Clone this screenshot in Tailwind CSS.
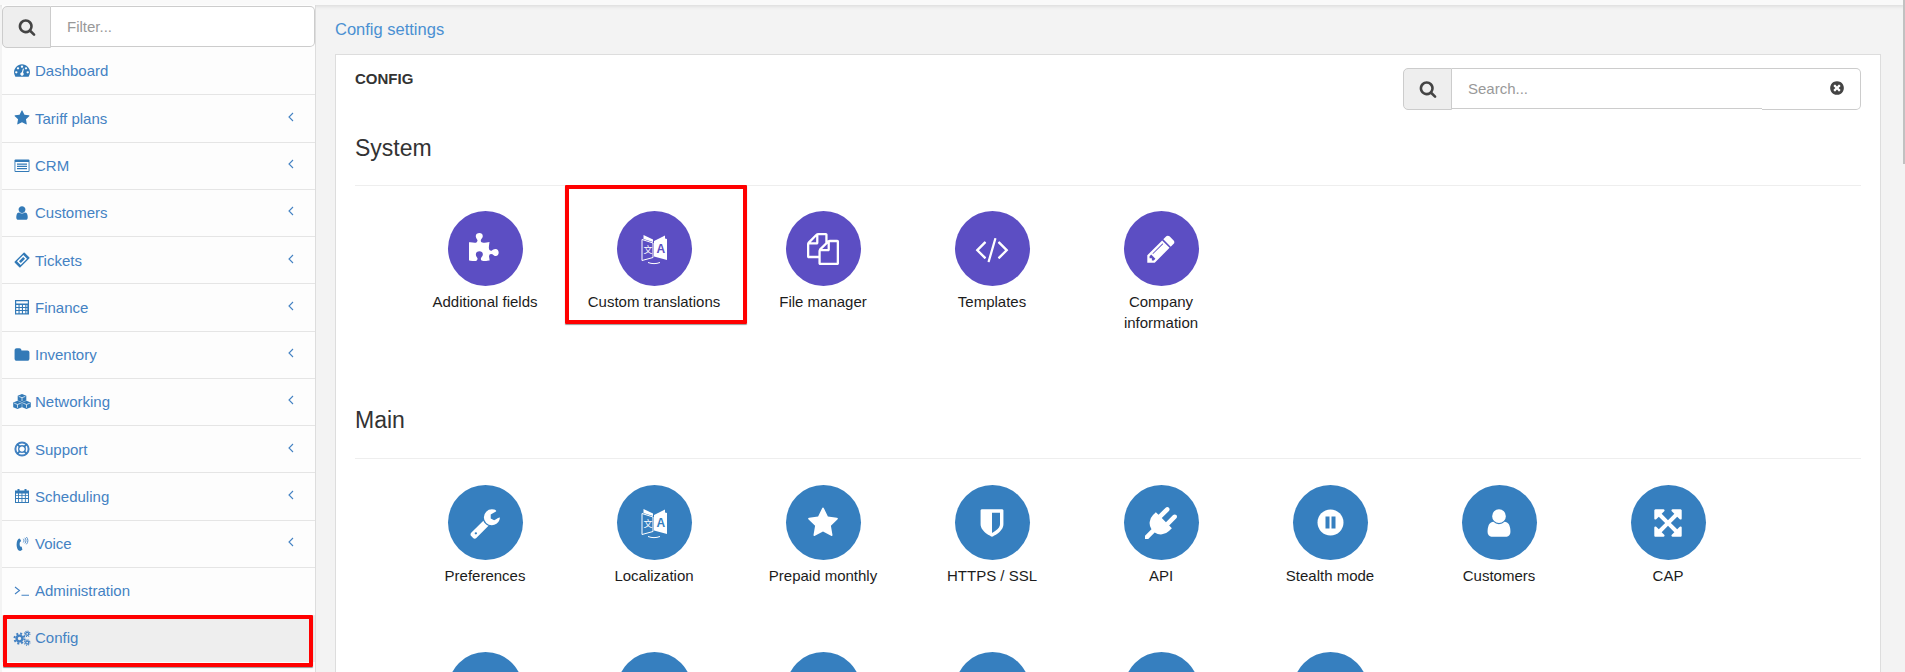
<!DOCTYPE html>
<html lang="en">
<head>
    <meta charset="UTF-8">
    <meta name="viewport" content="width=device-width, initial-scale=1.0">
    <title>Config settings</title>
    <script src="https://cdn.jsdelivr.net/npm/@tailwindcss/browser@4"></script>
</head>
<body class="relative h-[672px] overflow-hidden bg-[#f3f3f3] font-['Liberation_Sans',Arial,sans-serif] text-[15px] leading-[21px]">

    <!-- icon sheet -->
    <svg class="hidden">
        <symbol id="i-search" viewBox="0 0 1792 1792"><path d="M1216 832q0-185-131.5-316.5t-316.5-131.5-316.5 131.5-131.5 316.5 131.5 316.5 316.5 131.5 316.5-131.5 131.5-316.5zm512 832q0 52-38 90t-90 38q-54 0-90-38l-343-342q-179 124-399 124-143 0-273.5-55.5t-225-150-150-225-55.5-273.5 55.5-273.5 150-225 225-150 273.5-55.5 273.5 55.5 225 150 150 225 55.5 273.5q0 220-124 399l343 343q37 37 37 90z"/></symbol>
        <symbol id="i-dash" viewBox="0 0 1792 1792"><path d="M384 1152q0-53-37.5-90.5t-90.5-37.5-90.5 37.5-37.5 90.5 37.5 90.5 90.5 37.5 90.5-37.5 37.5-90.5zm192-448q0-53-37.5-90.5t-90.5-37.5-90.5 37.5-37.5 90.5 37.5 90.5 90.5 37.5 90.5-37.5 37.5-90.5zm428 481l101-382q6-26-7.5-48.5t-38.5-29.5-48 6.5-30 39.5l-101 382q-60 5-107 43.5t-63 98.5q-20 77 20 146t117 89 146-20 89-117q16-60-6-117t-72-91zm660-33q0-53-37.5-90.5t-90.5-37.5-90.5 37.5-37.5 90.5 37.5 90.5 90.5 37.5 90.5-37.5 37.5-90.5zm-640-640q0-53-37.5-90.5t-90.5-37.5-90.5 37.5-37.5 90.5 37.5 90.5 90.5 37.5 90.5-37.5 37.5-90.5zm448 192q0-53-37.5-90.5t-90.5-37.5-90.5 37.5-37.5 90.5 37.5 90.5 90.5 37.5 90.5-37.5 37.5-90.5zm320 448q0 261-141 483-19 29-54 29h-1402q-35 0-54-29-141-221-141-483 0-182 71-348t191-286 286-191 348-71 348 71 286 191 191 286 71 348z"/></symbol>
        <symbol id="i-star" viewBox="0 0 1792 1792"><path d="M1728 647q0 22-26 48l-363 354 86 500q1 7 1 20 0 21-10.5 35.5t-30.5 14.5q-19 0-40-12l-449-236-449 236q-22 12-40 12-21 0-31.5-14.5t-10.5-35.5q0-6 2-20l86-500-364-354q-25-27-25-48 0-37 56-46l502-73 225-455q19-41 49-41t49 41l225 455 502 73q56 9 56 46z"/></symbol>
        <symbol id="i-user" viewBox="0 0 1792 1792"><path d="M1536 1399q0 109-62.5 187t-150.5 78h-854q-88 0-150.5-78t-62.5-187q0-85 8.5-160.5t31.5-152 58.5-131 94-89 134.5-34.5q131 128 313 128t313-128q76 0 134.5 34.5t94 89 58.5 131 31.5 152 8.5 160.5zm-256-887q0 159-112.5 271.5t-271.5 112.5-271.5-112.5-112.5-271.5 112.5-271.5 271.5-112.5 271.5 112.5 112.5 271.5z"/></symbol>
        <symbol id="i-folder" viewBox="0 0 1792 1792"><path d="M1728 608v704q0 92-66 158t-158 66h-1216q-92 0-158-66t-66-158v-960q0-92 66-158t158-66h320q92 0 158 66t66 158v32h672q92 0 158 66t66 158z"/></symbol>
        <symbol id="i-crm" viewBox="0 0 16 16"><rect x="0.5" y="1.5" width="15" height="12.5" rx="1"/><rect x="1.4" y="4" width="13.2" height="9" fill="#fff"/><path d="M3 5.5h10v1.2H3zM3 7.8h10V9H3zM3 10.1h10v1.2H3z"/></symbol>
        <symbol id="i-ticket" viewBox="0 0 16 16"><g transform="rotate(-45 8 8)"><rect x="1" y="4" width="14" height="8" rx=".8"/><rect x="3.500" y="5.400" width="9" height="5.200" fill="#fff"/><rect x="5" y="6.700" width="6" height="2.600"/></g></symbol>
        <symbol id="i-calc" viewBox="0 0 16 16"><path fill-rule="evenodd" d="M1 1h14v14.500H1zM2.200 2.200v2.300h11.600V2.200zM2.200 6v2h2.300V6zm3.400 0v2h2.300V6zm3.400 0v2h2.300V6zm3.400 0v2h.900V6zM2.200 9v2h2.300V9zm3.400 0v2h2.300V9zm3.400 0v2h2.300V9zm3.400 0v2h.900V9zM2.200 12v2.300h2.300V12zm3.400 0v2.300h2.300V12zm3.400 0v2.300h2.300V12zm3.400 0v2.300h.900V12z"/></symbol>
        <symbol id="i-cubes" viewBox="0 0 18 15"><path d="M9 0l4.300 1.800v4.600L9 8.200 4.700 6.400V1.800zM4.500 6.800l4.300 1.800v4.600L4.500 15 .2 13.200V8.600zM13.500 6.800l4.300 1.800v4.600L13.500 15l-4.300-1.800V8.600z"/><path d="M5.700 2.400 9 3.700l3.300-1.300M9 3.700v3.300M1.200 9.200l3.300 1.300 3.300-1.300M4.500 10.500v3.300M10.200 9.200l3.300 1.300 3.300-1.300M13.500 10.500v3.300" fill="none" stroke="#fff" stroke-width=".7"/></symbol>
        <symbol id="i-ring" viewBox="0 0 16 16"><circle cx="8" cy="8" r="6.600" fill="none" stroke="currentColor" stroke-width="2"/><circle cx="8" cy="8" r="3.300" fill="none" stroke="currentColor" stroke-width="1.400"/><path d="M2.600 3.800 3.800 2.600l3 3-1.200 1.200zM12.200 2.600l1.200 1.200-3 3-1.200-1.200zM2.600 12.200l3-3 1.200 1.200-3 3zM10.400 9.200l3 3-1.200 1.200-3-3z"/></symbol>
        <symbol id="i-cal" viewBox="0 0 16 16"><path fill-rule="evenodd" d="M1 2.500h2.500V1h2v1.500h5V1h2v1.500H15V15H1zM2 5.500v1.700h2.100V5.500zm3 0v1.700h2.500V5.500zm3.400 0v1.700h2.500V5.500zm3.400 0v1.700H14V5.500zM2 8.100v2h2.100v-2zm3 0v2h2.500v-2zm3.400 0v2h2.500v-2zm3.400 0v2H14v-2zM2 11v3h2.100v-3zm3 0v3h2.500v-3zm3.400 0v3h2.500v-3zm3.400 0v3H14v-3z"/></symbol>
        <symbol id="i-voice" viewBox="0 0 16 16"><path d="M5.700 2.300 7.200 5 5.900 6.300c-.4 1.500-.3 3 .3 4.300l1.500.2.700 3-2.200 1.200c-1.900 0-3.600-2.800-3.600-6.500s1.600-5.800 3.400-6.200z"/><path d="M9.300 2.800c.9 1 .9 2.600 0 3.600M10.900 1.800c1.400 1.600 1.400 4 0 5.600M12.400 1c2 2.100 2 5.200 0 7.300" fill="none" stroke="currentColor" stroke-width=".9"/></symbol>
        <symbol id="i-term" viewBox="0 0 16 16"><path d="M1 5l4.500 3.500L1 12M7.500 13.200H15" fill="none" stroke="currentColor" stroke-width="1.100"/></symbol>
        <symbol id="i-cogs" viewBox="0 0 18 16"><circle cx="6.500" cy="8.500" r="2.900" fill="none" stroke="currentColor" stroke-width="2.400"/><circle cx="6.500" cy="8.500" r="5" fill="none" stroke="currentColor" stroke-width="2" stroke-dasharray="2 1.930"/><circle cx="14.200" cy="3.800" r="1.500" fill="none" stroke="currentColor" stroke-width="1.300"/><circle cx="14.200" cy="3.800" r="2.700" fill="none" stroke="currentColor" stroke-width="1.100" stroke-dasharray="1.100 1.020"/><circle cx="14.200" cy="12.500" r="1.500" fill="none" stroke="currentColor" stroke-width="1.300"/><circle cx="14.200" cy="12.500" r="2.700" fill="none" stroke="currentColor" stroke-width="1.100" stroke-dasharray="1.100 1.020"/></symbol>
        <symbol id="i-chev" viewBox="0 0 6 10"><path d="M5 1 1 5l4 4" fill="none" stroke="currentColor" stroke-width="1.100"/></symbol>
        <symbol id="i-times" viewBox="0 0 1792 1792"><path d="M1277 1122q0-26-19-45l-181-181 181-181q19-19 19-45 0-27-19-46l-90-90q-19-19-46-19-26 0-45 19l-181 181-181-181q-19-19-45-19-27 0-46 19l-90 90q-19 19-19 46 0 26 19 45l181 181-181 181q-19 19-19 45 0 27 19 46l90 90q19 19 46 19 26 0 45-19l181-181 181 181q19 19 45 19 27 0 46-19l90-90q19-19 19-46zm387-226q0 209-103 385.500t-279.500 279.500-385.500 103-385.500-103-279.500-279.500-103-385.500 103-385.500 279.500-279.500 385.500-103 385.500 103 279.500 279.500 103 385.500z"/></symbol>
        <symbol id="i-puzzle" viewBox="0 0 1792 1792"><path d="M1664 1098q0 81-44.500 135t-123.500 54q-41 0-77.500-17.500t-59-38-56.500-38-71-17.500q-110 0-110 124 0 39 16 115t15 115v5q-22 0-33 1-34 3-97.500 11.500t-115.500 13.500-98 5q-61 0-103-26.500t-42-83.500q0-37 17.500-71t38-56.500 38-59 17.500-77.500q0-79-54-123.500t-135-44.500q-84 0-143 45.500t-59 127.500q0 43 15 83t33.500 64.500 33.500 53 15 50.500q0 45-46 89-37 35-117 35-95 0-245-24-9-2-27.500-4t-27.500-4l-13-2q-3-1-6-1-2 0-3-1v-1024q2 1 17.500 3.500t34 5 21.500 3.500q150 24 245 24 80 0 117-35 46-44 46-89 0-22-15-50.500t-33.500-53-33.500-64.500-15-83q0-82 59-127.500t144-45.500q80 0 134 44.500t54 123.500q0 41-17.500 77.500t-38 59-38 56.500-17.500 71q0 57 42 83.500t103 26.500q64 0 180-15t163-17v2q-1 2-3.500 17.500t-5 34-3.500 21.500q-24 150-24 245 0 80 35 117 44 46 89 46 22 0 50.500-15t53-33.500 64.500-33.500 83-15q82 0 127.500 59t45.500 143z"/></symbol>
        <symbol id="i-files" viewBox="0 0 1792 1792"><path d="M1696 384q40 0 68 28t28 68v1216q0 40-28 68t-68 28h-960q-40 0-68-28t-28-68v-288h-544q-40 0-68-28t-28-68v-672q0-40 20-88t48-76l408-408q28-28 76-48t88-20h416q40 0 68 28t28 68v328q68-40 128-40h416zm-544 213l-299 299h299v-299zm-640-384l-299 299h299v-299zm196 647l316-316v-416h-384v416q0 40-28 68t-68 28h-416v640h512v-256q0-40 20-88t48-76zm956 804v-1152h-384v416q0 40-28 68t-68 28h-416v640h896z"/></symbol>
        <symbol id="i-code" viewBox="0 0 1920 1792"><path d="M617 1399l-50 50q-10 10-23 10t-23-10l-466-466q-10-10-10-23t10-23l466-466q10-10 23-10t23 10l50 50q10 10 10 23t-10 23l-393 393 393 393q10 10 10 23t-10 23zm591-1067l-373 1291q-4 13-15.500 19.500t-23.500 2.500l-62-17q-13-4-19.500-15.500t-2.500-24.500l373-1291q4-13 15.500-19.500t23.500-2.500l62 17q13 4 19.500 15.500t2.500 24.500zm657 651l-466 466q-10 10-23 10t-23-10l-50-50q-10-10-10-23t10-23l393-393-393-393q-10-10-10-23t10-23l50-50q10-10 23-10t23 10l466 466q10 10 10 23t-10 23z"/></symbol>
        <symbol id="i-pencil" viewBox="0 0 1792 1792"><path d="M491 1536l91-91-235-235-91 91v107h128v128h107zm523-928q0-22-22-22-10 0-17 7l-542 542q-7 7-7 17 0 22 22 22 10 0 17-7l542-542q7-7 7-17zm-54-192l416 416-832 832h-416v-416zm683 96q0 53-37 90l-166 166-416-416 166-165q36-38 90-38 53 0 91 38l235 234q37 39 37 91z"/></symbol>
        <symbol id="i-wrench" viewBox="0 0 1792 1792"><path d="M448 1472q0-26-19-45t-45-19-45 19-19 45 19 45 45 19 45-19 19-45zm644-420l-682 682q-37 37-90 37-52 0-91-37l-106-108q-38-36-38-90 0-53 38-91l681-681q39 98 114.500 173.500t173.500 114.500zm634-435q0 39-23 106-47 134-164.500 217.500t-258.500 83.500q-185 0-316.500-131.500t-131.500-316.500 131.500-316.500 316.500-131.500q58 0 121.500 16.500t107.500 46.500q16 11 16 28t-16 28l-293 169v224l193 107q5-3 79-48.500t135.500-81 70.500-35.500q15 0 23.500 10t8.500 25z"/></symbol>
        <symbol id="i-shield" viewBox="0 0 1792 1792"><path d="M1344 960v-640h-448v1137q119-63 213-137 235-184 235-360zm192-768v768q0 86-33.500 170.500t-83 150-118 127.500-126.500 103-121 77.500-89.500 49.500-42.500 20q-12 6-26 6t-26-6q-16-7-42.500-20t-89.500-49.500-121-77.500-126.500-103-118-127.500-83-150-33.500-170.500v-768q0-26 19-45t45-19h1152q26 0 45 19t19 45z"/></symbol>
        <symbol id="i-plug" viewBox="0 0 1792 1792"><path d="M1755 453q37 38 37 90.500t-37 90.500l-401 400 150 150-160 160q-163 163-389.500 186.500t-411.500-100.500l-362 362h-181v-181l362-362q-124-185-100.500-411.500t186.500-389.500l160-160 150 150 400-401q38-37 91-37t90 37 37 90.500-37 90.500l-400 401 234 234 401-400q38-37 91-37t90 37z"/></symbol>
        <symbol id="i-expand" viewBox="0 0 1792 1792"><path d="M1411 541l-355 355 355 355 144-144q29-31 70-14 39 17 39 59v448q0 26-19 45t-45 19h-448q-42 0-59-40-17-39 14-69l144-144-355-355-355 355 144 144q31 30 14 69-17 40-59 40h-448q-26 0-45-19t-19-45v-448q0-42 40-59 39-17 69 14l144 144 355-355-355-355-144 144q-19 19-45 19-12 0-24-5-40-17-40-59v-448q0-26 19-45t45-19h448q42 0 59 40 17 39-14 69l-144 144 355 355 355-355-144-144q-31-30-14-69 17-40 59-40h448q26 0 45 19t19 45v448q0 42-39 59-13 5-25 5-26 0-45-19z"/></symbol>
    </svg>

    <div class="h-[5px] bg-[#f9f9f9] shadow-[0_1px_4px_rgba(0,0,0,0.12)]"></div>

    <div class="flex h-[667px]">
        <!-- sidebar -->
        <aside class="ml-[2px] h-full w-[314px] shrink-0 border-r border-[#dddddd] bg-[#fdfdfd]">
            <div class="mt-[1px] flex items-start">
                <span class="flex h-[42px] w-[49px] shrink-0 items-center justify-center rounded-l-[5px] border border-[#cccccc] bg-[#eeeeee] text-[#444444]">
                    <svg class="size-[18px] fill-current"><use href="#i-search"/></svg>
                </span>
                <input placeholder="Filter..." class="h-[41px] min-w-0 flex-1 rounded-r-[5px] border border-l-0 border-[#cccccc] bg-white pl-4 text-[15px] placeholder:text-[#999999]">
            </div>

            <nav class="text-[#4482c3] [&_svg]:fill-[#337ab7]">
                <a class="flex h-[47.25px] items-center border-b border-[#e5e5e5] pb-[2px]"><span class="flex w-[33px] justify-center pl-[6px]"><svg class="size-4"><use href="#i-dash"/></svg></span>Dashboard</a>
                <a class="flex h-[47.25px] items-center border-b border-[#e5e5e5]"><span class="flex w-[33px] justify-center pl-[6px]"><svg class="size-4"><use href="#i-star"/></svg></span>Tariff plans<svg class="ml-auto mr-[21px] -mt-[3px] h-[10px] w-[6px]"><use href="#i-chev"/></svg></a>
                <a class="flex h-[47.25px] items-center border-b border-[#e5e5e5]"><span class="flex w-[33px] justify-center pl-[6px]"><svg class="size-4"><use href="#i-crm"/></svg></span>CRM<svg class="ml-auto mr-[21px] -mt-[3px] h-[10px] w-[6px]"><use href="#i-chev"/></svg></a>
                <a class="flex h-[47.25px] items-center border-b border-[#e5e5e5]"><span class="flex w-[33px] justify-center pl-[6px]"><svg class="size-4"><use href="#i-user"/></svg></span>Customers<svg class="ml-auto mr-[21px] -mt-[3px] h-[10px] w-[6px]"><use href="#i-chev"/></svg></a>
                <a class="flex h-[47.25px] items-center border-b border-[#e5e5e5]"><span class="flex w-[33px] justify-center pl-[6px]"><svg class="size-4"><use href="#i-ticket"/></svg></span>Tickets<svg class="ml-auto mr-[21px] -mt-[3px] h-[10px] w-[6px]"><use href="#i-chev"/></svg></a>
                <a class="flex h-[47.25px] items-center border-b border-[#e5e5e5]"><span class="flex w-[33px] justify-center pl-[6px]"><svg class="size-4"><use href="#i-calc"/></svg></span>Finance<svg class="ml-auto mr-[21px] -mt-[3px] h-[10px] w-[6px]"><use href="#i-chev"/></svg></a>
                <a class="flex h-[47.25px] items-center border-b border-[#e5e5e5]"><span class="flex w-[33px] justify-center pl-[6px]"><svg class="size-4"><use href="#i-folder"/></svg></span>Inventory<svg class="ml-auto mr-[21px] -mt-[3px] h-[10px] w-[6px]"><use href="#i-chev"/></svg></a>
                <a class="flex h-[47.25px] items-center border-b border-[#e5e5e5]"><span class="flex w-[33px] justify-center pl-[6px]"><svg class="h-[15px] w-[18px]"><use href="#i-cubes"/></svg></span>Networking<svg class="ml-auto mr-[21px] -mt-[3px] h-[10px] w-[6px]"><use href="#i-chev"/></svg></a>
                <a class="flex h-[47.25px] items-center border-b border-[#e5e5e5]"><span class="flex w-[33px] justify-center pl-[6px]"><svg class="size-4"><use href="#i-ring"/></svg></span>Support<svg class="ml-auto mr-[21px] -mt-[3px] h-[10px] w-[6px]"><use href="#i-chev"/></svg></a>
                <a class="flex h-[47.25px] items-center border-b border-[#e5e5e5]"><span class="flex w-[33px] justify-center pl-[6px]"><svg class="size-4"><use href="#i-cal"/></svg></span>Scheduling<svg class="ml-auto mr-[21px] -mt-[3px] h-[10px] w-[6px]"><use href="#i-chev"/></svg></a>
                <a class="flex h-[47.25px] items-center border-b border-[#e5e5e5]"><span class="flex w-[33px] justify-center pl-[6px]"><svg class="size-4"><use href="#i-voice"/></svg></span>Voice<svg class="ml-auto mr-[21px] -mt-[3px] h-[10px] w-[6px]"><use href="#i-chev"/></svg></a>
                <a class="flex h-[47.25px] items-center pb-[2px]"><span class="flex w-[33px] justify-center pl-[6px]"><svg class="size-4"><use href="#i-term"/></svg></span>Administration</a>
                <a class="relative flex h-[47.25px] items-center bg-[#eeeeee] pb-[2px]"><span class="flex w-[33px] justify-center pl-[6px]"><svg class="h-4 w-[18px]"><use href="#i-cogs"/></svg></span>Config
                    <span class="absolute -bottom-[5px] left-[1px] top-0 w-[310px] rounded-[1px] border-4 border-[#ff0000] shadow-[0_1px_1px_rgba(0,0,0,0.4)]"></span>
                </a>
            </nav>
        </aside>

        <!-- content -->
        <main class="ml-[19px] mr-[24px] min-w-0 flex-1">
            <div class="flex h-[49px] items-center pb-[1px] text-[16.5px] text-[#4a90d2]">Config settings</div>

            <section class="h-[618px] overflow-hidden border border-b-0 border-[#dddddd] bg-white px-[19px] pt-[13px] text-[#333333]">
                <div class="flex items-start justify-between">
                    <h3 class="font-bold">CONFIG</h3>
                    <div class="flex w-[458px] items-start">
                        <span class="flex h-[42px] w-[49px] shrink-0 items-center justify-center rounded-l-[5px] border border-[#cccccc] bg-[#eeeeee] text-[#444444]">
                            <svg class="size-[18px] fill-current"><use href="#i-search"/></svg>
                        </span>
                        <input placeholder="Search..." class="h-[41px] min-w-0 flex-1 border-y border-[#cccccc] bg-white pl-4 text-[15px] placeholder:text-[#999999]">
                        <span class="flex h-[42px] w-[99px] shrink-0 items-center justify-end rounded-r-[5px] border-y border-r border-[#cccccc] pb-[3px] pr-[15px] text-[#444444]">
                            <svg class="size-4 fill-current"><use href="#i-times"/></svg>
                        </span>
                    </div>
                </div>

                <h2 class="mt-[25px] text-[23px] leading-[26px]">System</h2>
                <hr class="mt-[24px] border-[#eeeeee]">
                <div class="mt-[25px] grid grid-cols-[repeat(8,169px)] pl-[45.5px] text-[#1c1c1c] [&_svg]:fill-white">
                    <div class="flex h-[167px] flex-col items-center text-center">
                        <span class="flex size-[75px] items-center justify-center rounded-full bg-[#5c4ec3]"><svg class="size-8"><use href="#i-puzzle"/></svg></span>
                        <span class="mt-[5px] w-[140px]">Additional fields</span>
                    </div>
                    <div class="relative flex h-[167px] flex-col items-center text-center">
                        <span class="flex size-[75px] items-center justify-center rounded-full bg-[#5c4ec3]">
                            <svg class="h-[32px] w-[30px]" viewBox="0 0 30 32"><path d="M3 6.500 14 10v14.500L3 27.500z" fill="none" stroke="#fff"/><path d="M4.500 2 14 6.500v2.500L4.500 6z"/><path d="M15 8 26 2.500v3l2 .5v21l-13-3.500z"/><path d="M9 29.500c4 1.500 8 1.500 12 0" fill="none" stroke="#fff"/><text x="4.500" y="20" font-size="9" style="font-family:'Noto Sans CJK SC',sans-serif">文</text><text x="17.500" y="20" font-size="12" font-weight="700" style="fill:#5c4ec3;font-family:'Liberation Sans',sans-serif">A</text></svg>
                        </span>
                        <span class="mt-[5px] w-[140px]">Custom translations</span>
                        <span class="absolute -left-[4.500px] -top-[26px] h-[139px] w-[182px] rounded-[1px] border-[4.500px] border-[#ff0000] shadow-[0_1px_1px_rgba(0,0,0,0.4)]"></span>
                    </div>
                    <div class="flex h-[167px] flex-col items-center text-center">
                        <span class="flex size-[75px] items-center justify-center rounded-full bg-[#5c4ec3]"><svg class="size-8"><use href="#i-files"/></svg></span>
                        <span class="mt-[5px] w-[140px]">File manager</span>
                    </div>
                    <div class="flex h-[167px] flex-col items-center text-center">
                        <span class="flex size-[75px] items-center justify-center rounded-full bg-[#5c4ec3]"><svg class="h-8 w-[34px]"><use href="#i-code"/></svg></span>
                        <span class="mt-[5px] w-[140px]">Templates</span>
                    </div>
                    <div class="flex h-[167px] flex-col items-center text-center">
                        <span class="flex size-[75px] items-center justify-center rounded-full bg-[#5c4ec3]"><svg class="size-8"><use href="#i-pencil"/></svg></span>
                        <span class="mt-[5px] w-[140px]">Company information</span>
                    </div>
                </div>

                <h2 class="mt-[29px] text-[23px] leading-[26px]">Main</h2>
                <hr class="mt-[25px] border-[#eeeeee]">
                <div class="mt-[26px] grid grid-cols-[repeat(8,169px)] pl-[45.5px] text-[#1c1c1c] [&_svg]:fill-white">
                    <div class="flex h-[167px] flex-col items-center text-center">
                        <span class="flex size-[75px] items-center justify-center rounded-full bg-[#367fbf]"><svg class="size-8"><use href="#i-wrench"/></svg></span>
                        <span class="mt-[5px] w-[140px]">Preferences</span>
                    </div>
                    <div class="flex h-[167px] flex-col items-center text-center">
                        <span class="flex size-[75px] items-center justify-center rounded-full bg-[#367fbf]">
                            <svg class="h-[32px] w-[30px]" viewBox="0 0 30 32"><path d="M3 6.500 14 10v14.500L3 27.500z" fill="none" stroke="#fff"/><path d="M4.500 2 14 6.500v2.500L4.500 6z"/><path d="M15 8 26 2.500v3l2 .5v21l-13-3.500z"/><path d="M9 29.500c4 1.500 8 1.500 12 0" fill="none" stroke="#fff"/><text x="4.500" y="20" font-size="9" style="font-family:'Noto Sans CJK SC',sans-serif">文</text><text x="17.500" y="20" font-size="12" font-weight="700" style="fill:#367fbf;font-family:'Liberation Sans',sans-serif">A</text></svg>
                        </span>
                        <span class="mt-[5px] w-[140px]">Localization</span>
                    </div>
                    <div class="flex h-[167px] flex-col items-center text-center">
                        <span class="flex size-[75px] items-center justify-center rounded-full bg-[#367fbf]"><svg class="size-8"><use href="#i-star"/></svg></span>
                        <span class="mt-[5px] w-[140px]">Prepaid monthly</span>
                    </div>
                    <div class="flex h-[167px] flex-col items-center text-center">
                        <span class="flex size-[75px] items-center justify-center rounded-full bg-[#367fbf]"><svg class="size-8"><use href="#i-shield"/></svg></span>
                        <span class="mt-[5px] w-[140px]">HTTPS / SSL</span>
                    </div>
                    <div class="flex h-[167px] flex-col items-center text-center">
                        <span class="flex size-[75px] items-center justify-center rounded-full bg-[#367fbf]"><svg class="size-8"><use href="#i-plug"/></svg></span>
                        <span class="mt-[5px] w-[140px]">API</span>
                    </div>
                    <div class="flex h-[167px] flex-col items-center text-center">
                        <span class="flex size-[75px] items-center justify-center rounded-full bg-[#367fbf]">
                            <svg class="size-[27px]" viewBox="0 0 27 27"><circle cx="13.500" cy="13.500" r="13"/><path d="M8.500 7.500h4v12h-4zM14.500 7.500h4v12h-4z" style="fill:#367fbf"/></svg>
                        </span>
                        <span class="mt-[5px] w-[140px]">Stealth mode</span>
                    </div>
                    <div class="flex h-[167px] flex-col items-center text-center">
                        <span class="flex size-[75px] items-center justify-center rounded-full bg-[#367fbf]"><svg class="size-8"><use href="#i-user"/></svg></span>
                        <span class="mt-[5px] w-[140px]">Customers</span>
                    </div>
                    <div class="flex h-[167px] flex-col items-center text-center">
                        <span class="flex size-[75px] items-center justify-center rounded-full bg-[#367fbf]"><svg class="size-8"><use href="#i-expand"/></svg></span>
                        <span class="mt-[5px] w-[140px]">CAP</span>
                    </div>
                    <div class="flex h-[167px] flex-col items-center"><span class="size-[75px] rounded-full bg-[#367fbf]"></span></div>
                    <div class="flex h-[167px] flex-col items-center"><span class="size-[75px] rounded-full bg-[#367fbf]"></span></div>
                    <div class="flex h-[167px] flex-col items-center"><span class="size-[75px] rounded-full bg-[#367fbf]"></span></div>
                    <div class="flex h-[167px] flex-col items-center"><span class="size-[75px] rounded-full bg-[#367fbf]"></span></div>
                    <div class="flex h-[167px] flex-col items-center"><span class="size-[75px] rounded-full bg-[#367fbf]"></span></div>
                    <div class="flex h-[167px] flex-col items-center"><span class="size-[75px] rounded-full bg-[#367fbf]"></span></div>
                </div>
            </section>
        </main>
    </div>

    <!-- page scrollbar -->
    <div class="absolute right-0 top-0 h-[164px] w-[2px] bg-[#c1c1c1]"></div>
</body>
</html>
